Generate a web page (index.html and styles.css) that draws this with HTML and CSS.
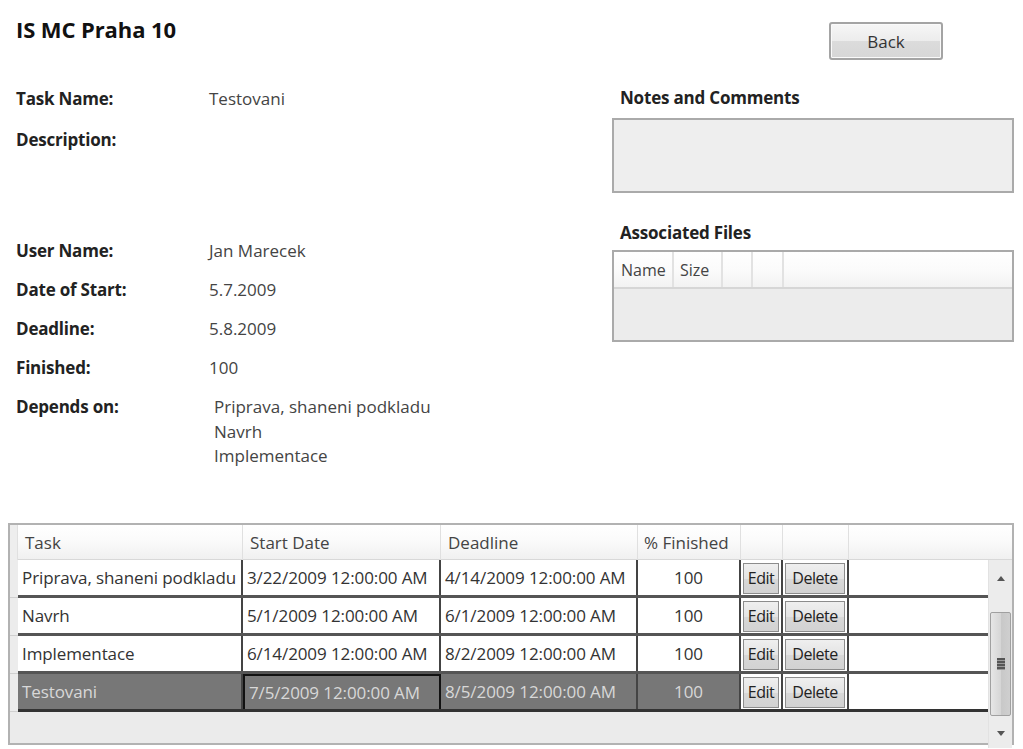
FILE: index.html
```html
<!DOCTYPE html>
<html>
<head>
<meta charset="utf-8">
<link rel="stylesheet" href="styles.css">
</head>
<body>
<div class="top">
  <div class="left">
    <h1 class="title">IS MC Praha 10</h1>
    <div class="info">
      <div class="lbl r1">Task Name:</div><div class="val r1">Testovani</div>
      <div class="lbl rdesc">Description:</div><div class="val rdesc"></div>
      <div class="lbl r">User Name:</div><div class="val r">Jan Marecek</div>
      <div class="lbl r">Date of Start:</div><div class="val r">5.7.2009</div>
      <div class="lbl r">Deadline:</div><div class="val r">5.8.2009</div>
      <div class="lbl r">Finished:</div><div class="val r">100</div>
      <div class="lbl r">Depends on:</div>
      <div class="val deps">
        <div>Priprava, shaneni podkladu</div>
        <div>Navrh</div>
        <div>Implementace</div>
      </div>
    </div>
  </div>
  <div class="right">
    <div class="btnrow"><button class="back">Back</button></div>
    <div class="sec-title notes-title">Notes and Comments</div>
    <div class="notes"></div>
    <div class="sec-title files-title">Associated Files</div>
    <div class="files">
      <div class="files-head">
        <div class="fh name">Name</div>
        <div class="fh size">Size</div>
        <div class="fh e1"></div>
        <div class="fh e2"></div>
        <div class="fh rest"></div>
      </div>
    </div>
  </div>
</div>

<div class="datagrid">
  <div class="dg-head">
    <div class="hc gut"></div>
    <div class="hc">Task</div>
    <div class="hc">Start Date</div>
    <div class="hc">Deadline</div>
    <div class="hc">% Finished</div>
    <div class="hc"></div>
    <div class="hc"></div>
    <div class="hc last"></div>
  </div>
  <div class="dg-body">
    <div class="dg-rows">
      <div class="row">
        <div class="gut"></div>
        <div class="c">Priprava, shaneni podkladu</div>
        <div class="c">3/22/2009 12:00:00 AM</div>
        <div class="c">4/14/2009 12:00:00 AM</div>
        <div class="c num">100</div>
        <div class="c b"><span class="gbtn">Edit</span></div>
        <div class="c b"><span class="gbtn">Delete</span></div>
        <div class="c fill"></div>
      </div>
      <div class="row">
        <div class="gut"></div>
        <div class="c">Navrh</div>
        <div class="c">5/1/2009 12:00:00 AM</div>
        <div class="c">6/1/2009 12:00:00 AM</div>
        <div class="c num">100</div>
        <div class="c b"><span class="gbtn">Edit</span></div>
        <div class="c b"><span class="gbtn">Delete</span></div>
        <div class="c fill"></div>
      </div>
      <div class="row">
        <div class="gut"></div>
        <div class="c">Implementace</div>
        <div class="c">6/14/2009 12:00:00 AM</div>
        <div class="c">8/2/2009 12:00:00 AM</div>
        <div class="c num">100</div>
        <div class="c b"><span class="gbtn">Edit</span></div>
        <div class="c b"><span class="gbtn">Delete</span></div>
        <div class="c fill"></div>
      </div>
      <div class="row sel">
        <div class="gut"></div>
        <div class="c s">Testovani</div>
        <div class="c s focus">7/5/2009 12:00:00 AM</div>
        <div class="c s">8/5/2009 12:00:00 AM</div>
        <div class="c s num">100</div>
        <div class="c b"><span class="gbtn">Edit</span></div>
        <div class="c b"><span class="gbtn">Delete</span></div>
        <div class="c fill"></div>
      </div>
    </div>
    <div class="vscroll">
      <div class="arrow up"><svg width="8" height="5" viewBox="0 0 8 5"><path d="M0 5 L4 0 L8 5 Z" fill="#555"/></svg></div>
      <div class="track">
        <div class="thumb"><span class="grip"></span></div>
      </div>
      <div class="arrow down"><svg width="8" height="5" viewBox="0 0 8 5"><path d="M0 0 L4 5 L8 0 Z" fill="#555"/></svg></div>
    </div>
  </div>
</div>
</body>
</html>
```

FILE: styles.css
```css
* { box-sizing: border-box; }
body {
  margin: 0;
  font-family: "Open Sans", "Liberation Sans", sans-serif;
  background: #fff;
  color: #333;
  width: 1023px;
  height: 749px;
  overflow: hidden;
}
.top {
  display: flex;
  height: 515px;
}
.left {
  width: 612px;
  padding-left: 16px;
  padding-top: 16px;
}
.title {
  margin: 0;
  font-size: 22px;
  line-height: 26px;
  font-weight: 700;
  color: #111;
  height: 72px;
  letter-spacing: -0.1px;
}
.info {
  display: grid;
  grid-template-columns: 193px 1fr;
  font-size: 17px;
}
.lbl {
  font-weight: 700;
  color: #222;
  line-height: 22px;
  letter-spacing: -0.2px;
}
.val {
  color: #444;
  line-height: 22px;
}
.r1 { height: 41px; }
.rdesc { height: 111px; }
.r { height: 39px; }
.deps {
  padding-left: 5px;
  line-height: 24.5px;
  margin-top: -1px;
}
.right {
  width: 402px;
  padding-top: 22px;
}
.btnrow {
  padding-left: 217px;
  height: 65px;
}
.back {
  width: 114px;
  height: 38px;
  font-family: inherit;
  font-size: 17px;
  color: #333;
  border: 2px solid #a4a4a4;
  border-radius: 3px;
  background: linear-gradient(#f6f6f6 0%, #ececec 50%, #dcdcdc 51%, #d6d6d6 100%);
  box-shadow: inset 0 0 0 1px #fafafa;
  padding: 0;
}
.sec-title {
  font-weight: 700;
  font-size: 17px;
  line-height: 22px;
  color: #222;
  padding-left: 8px;
  letter-spacing: -0.2px;
}
.notes-title { height: 31px; }
.notes {
  height: 75px;
  border: 2px solid #aaa;
  background: #eeeeee;
  margin-bottom: 29px;
}
.files-title { height: 28px; }
.files {
  height: 92px;
  border: 2px solid #aaa;
  background: #ececec;
}
.files-head {
  display: flex;
  height: 37px;
  background: linear-gradient(#fff 0%, #fbfbfb 50%, #f2f2f2 100%);
  border-bottom: 2px solid #d6d6d6;
}
.fh {
  font-size: 16px;
  color: #444;
  line-height: 37px;
  padding-left: 6px;
  border-right: 2px solid #e2e2e2;
  white-space: nowrap;
}
.fh.name { width: 60px; padding-left: 7px; }
.fh.size { width: 49px; }
.fh.e1 { width: 30px; }
.fh.e2 { width: 31px; }
.fh.rest { flex: 1; border-right: none; }

.datagrid {
  margin-left: 8px;
  margin-top: 8px;
  width: 1006px;
  height: 222px;
  border: 2px solid #b2b2b2;
  background: #ebebeb;
  font-size: 17px;
  display: flex;
  flex-direction: column;
}
.dg-head {
  display: grid;
  grid-template-columns: 8px 225px 198px 197px 103px 42px 66px 1fr;
  height: 35px;
  background: linear-gradient(#ffffff 0%, #fafafa 50%, #f0f0f0 100%);
  border-bottom: 1px solid #d8d8d8;
}
.hc {
  line-height: 35px;
  padding-left: 7px;
  color: #444;
  border-right: 1px solid #e0e0e0;
  white-space: nowrap;
}
.hc:nth-child(5) { padding-left: 6px; }
.hc.gut { padding: 0; background: #eeeeee; }
.hc.last { border-right: none; }
.dg-body {
  display: flex;
  flex: 1;
}
.dg-rows {
  flex: 1;
}
.row {
  display: grid;
  grid-template-columns: 8px 225px 198px 197px 103px 42px 66px 1fr;
  height: 38px;
  border-bottom: 3px solid #555;
  background: #fff;
}
.row .gut {
  background: #ececec;
  border-bottom: 1px solid #d0d0d0;
  margin-bottom: -3px;
}
.c {
  line-height: 35px;
  padding-left: 4px;
  color: #333;
  border-right: 2px solid #444;
  white-space: nowrap;
  overflow: hidden;
  letter-spacing: -0.1px;
}
.c.num { text-align: center; padding-left: 0; }
.c.fill { border-right: none; }
.c.b {
  padding: 3px 2px 1px 2px;
  background: #fff;
  letter-spacing: 0;
}
.gbtn {
  display: block;
  height: 31px;
  line-height: 29px;
  border: 1px solid #8c8c8c;
  background: linear-gradient(#efefef 0%, #e4e4e4 50%, #d8d8d8 51%, #d2d2d2 100%);
  color: #222;
  text-align: center;
  font-size: 16px;
  letter-spacing: -0.5px;
}
.row.sel { background: #fff; border-bottom-color: #333; }
.c.s {
  background: #777;
  color: #d8d8d8;
}
.c.focus {
  border: 2px solid #111;
  border-bottom: none;
  line-height: 33px;
}
.vscroll {
  width: 24px;
  display: flex;
  flex-direction: column;
  background: #ececec;
  border-left: 1px solid #e2e2e2;
}
.arrow {
  height: 30px;
  display: flex;
  align-items: center;
  justify-content: center;
}
.arrow.up { height: 24px; margin-top: 6px; }
.track {
  flex: 1;
  padding-top: 22px;
  padding-bottom: 2px;
}
.thumb {
  height: 104px;
  margin: 0 1px;
  border: 1px solid #a0a0a0;
  border-radius: 2px;
  background: linear-gradient(90deg, #e6e6e6 0%, #d6d6d6 50%, #c8c8c8 51%, #cfcfcf 100%);
  display: flex;
  align-items: center;
  justify-content: center;
}
.grip {
  width: 8px;
  height: 12px;
  background: repeating-linear-gradient(#555 0 2px, #999 2px 3px);
}
```
